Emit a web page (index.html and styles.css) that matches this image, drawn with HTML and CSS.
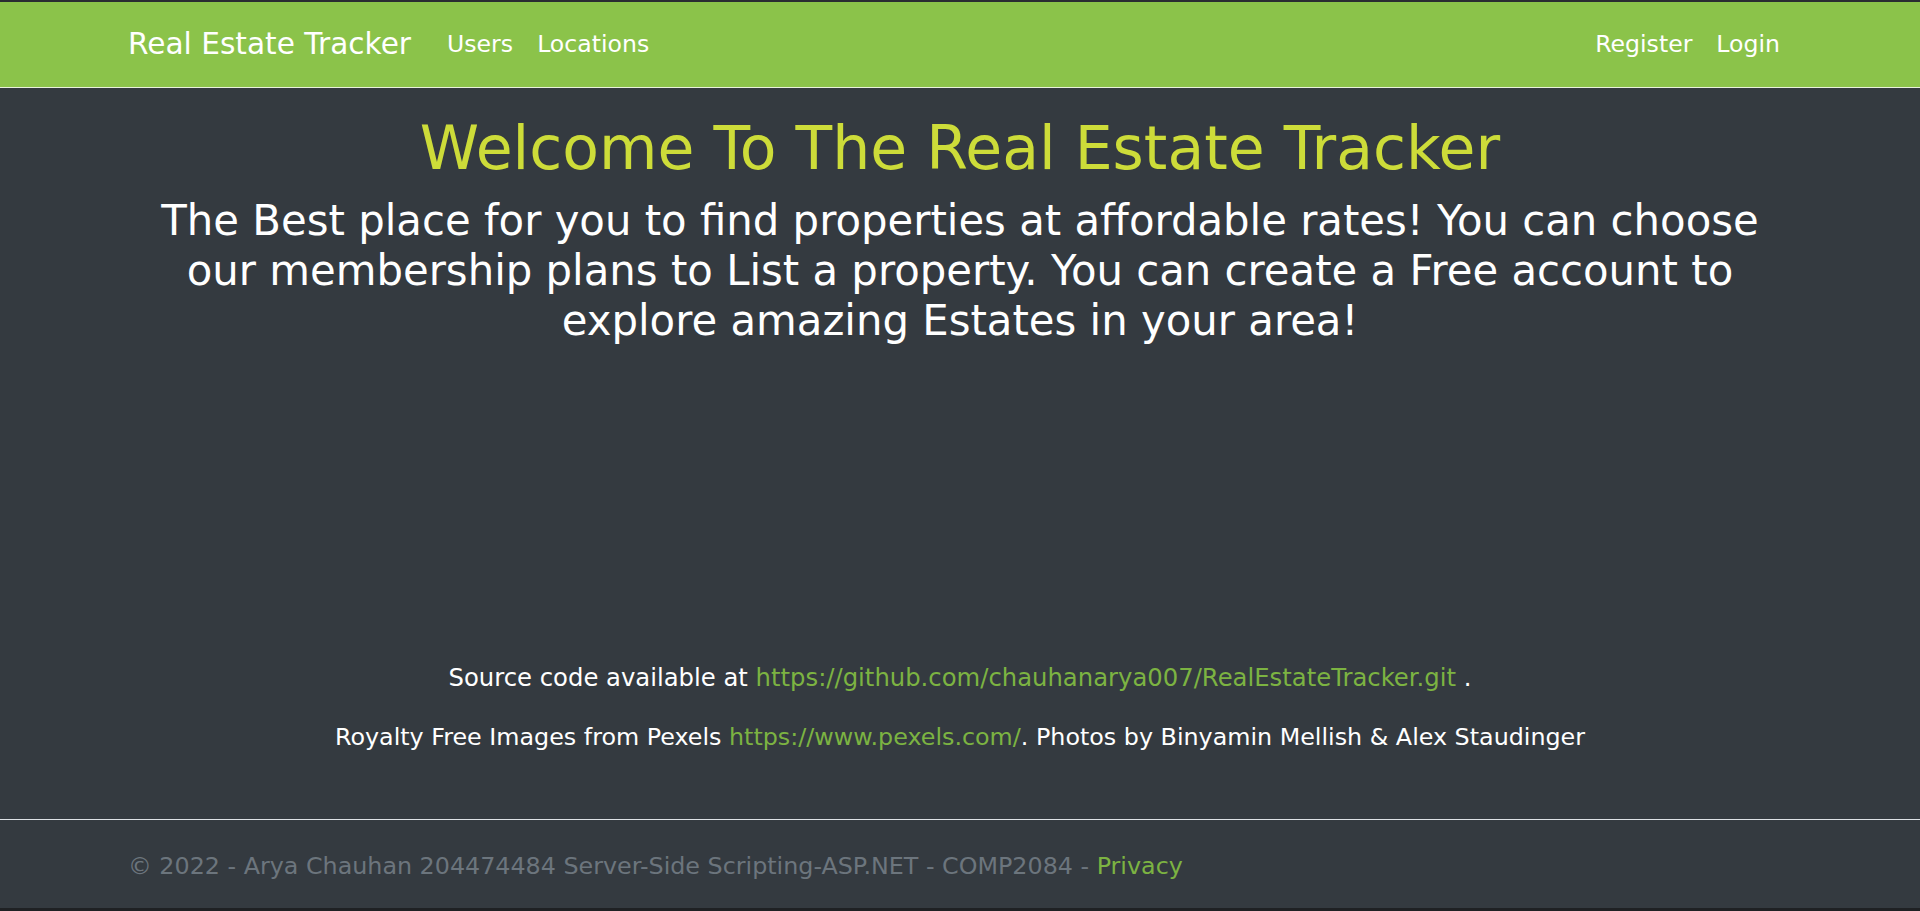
FILE: index.html
```html
<!DOCTYPE html>
<html lang="en">
<head>
<meta charset="utf-8">
<title>Real Estate Tracker</title>
<link rel="stylesheet" href="styles.css">
</head>
<body>
  <header class="navbar">
    <div class="nav-inner">
      <div class="nav-left">
        <a class="brand" href="#">Real Estate Tracker</a>
        <a class="nav-link" href="#">Users</a>
        <a class="nav-link" href="#">Locations</a>
      </div>
      <div class="nav-right">
        <a class="nav-link" href="#">Register</a>
        <a class="nav-link" href="#">Login</a>
      </div>
    </div>
  </header>
  <main class="main">
    <h1 class="title">Welcome To The Real Estate Tracker</h1>
    <p class="lead">The Best place for you to find properties at affordable rates! You can choose our membership plans to List a property. You can create a Free account to explore amazing Estates in your area!</p>
    <div class="credits">
      <p>Source code available at <a href="#">https://github.com/chauhanarya007/RealEstateTracker.git</a> .</p>
      <p class="royalty">Royalty Free Images from Pexels <a href="#">https://www.pexels.com/</a>. Photos by Binyamin Mellish &amp; Alex Staudinger</p>
    </div>
  </main>
  <footer class="footer">
    <div class="footer-inner">© 2022 - Arya Chauhan 204474484 Server-Side Scripting-ASP.NET - COMP2084 - <a href="#">Privacy</a></div>
  </footer>
</body>
</html>
```
FILE: styles.css
```css
* { box-sizing: border-box; }
html, body { height: 100%; }
body {
  margin: 0;
  min-height: 100vh;
  display: flex;
  flex-direction: column;
  background: #343a40;
  color: #ffffff;
  font-family: "DejaVu Sans", "Noto Sans", sans-serif;
  font-size: 23.8px;
  border-top: 2px solid #2a2d32;
  border-bottom: 3px solid #1f2124;
}
a { text-decoration: none; }

.navbar {
  background: #8bc34a;
  height: 86px;
  border-bottom: 1px solid #e9f2dc;
  flex: none;
}
.nav-inner {
  height: 100%;
  padding: 0 128px 2px;
  display: flex;
  align-items: center;
  justify-content: space-between;
}
.nav-left, .nav-right { display: flex; align-items: center; }
.brand {
  color: #ffffff;
  font-size: 29.6px;
  margin-right: 24px;
}
.nav-link {
  color: #ffffff;
  font-size: 23.6px;
  padding: 0 12px;
}

.main {
  flex: 1;
  display: flex;
  flex-direction: column;
  align-items: center;
  text-align: center;
}
.title {
  margin: 24px 0 12px;
  font-size: 60px;
  font-weight: normal;
  line-height: 1.2;
  color: #cddc39;
}
.lead {
  margin: 0;
  max-width: 1620px;
  font-size: 41.8px;
  line-height: 50px;
  color: #ffffff;
}
.credits {
  margin-top: 314px;
}
.credits p {
  margin: 0 0 23px;
  font-size: 24.3px;
  line-height: 36px;
}
.credits p.royalty { font-size: 23.8px; }
.credits a { color: #7cb342; }

.footer {
  flex: none;
  border-top: 1px solid #dee2e6;
  padding: 28px 128px 24px;
  line-height: 36px;
  color: #6c757d;
}
.footer a { color: #7cb342; }
```
